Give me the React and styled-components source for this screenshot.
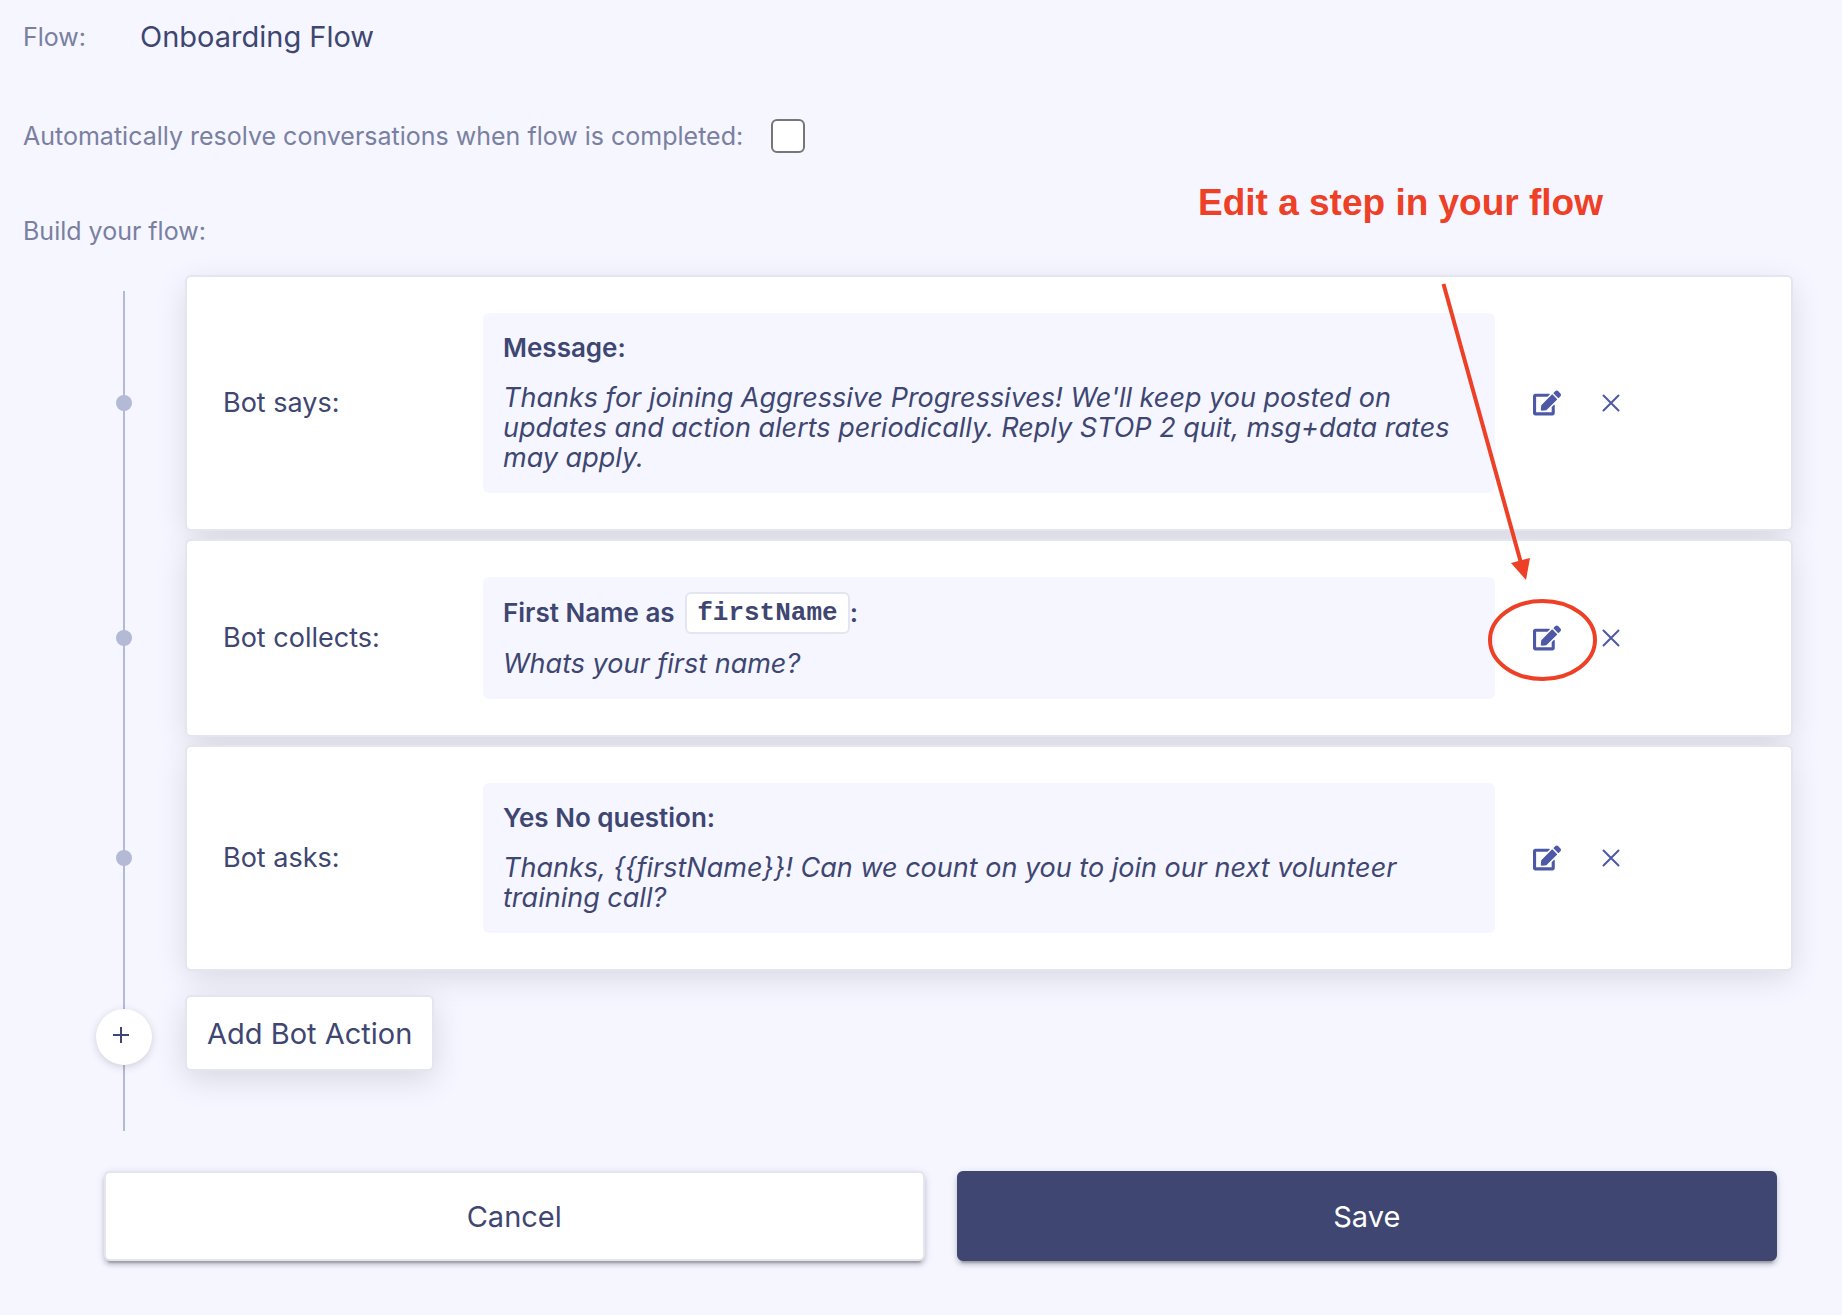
import React, { useState } from 'react';
import styled, { createGlobalStyle } from 'styled-components';
import { FaEdit } from 'react-icons/fa';

const colors = {
  page: '#f5f6ff',
  text: '#3e4671',
  label: '#7a80a0',
  icon: '#4d58a6',
  rail: '#b4b9d6',
  border: '#e3e5f1',
  callout: '#ee4026',
};

const GlobalStyle = createGlobalStyle`
  * {
    box-sizing: border-box;
  }
  body {
    margin: 0;
    background: ${colors.page};
    color: ${colors.text};
    font-family: Inter, 'Open Sans', sans-serif;
    font-size: 27px;
    line-height: 30px;
  }
  button {
    font-family: inherit;
    color: inherit;
    cursor: pointer;
  }
`;

const Page = styled.form`
  position: relative;
  padding: 20px 49px 54px 0;
`;

const Field = styled.div`
  display: flex;
  align-items: center;
  height: 34px;
  padding-left: 23px;
  margin-bottom: ${({ $gap }) => $gap}px;
`;

const Label = styled.label`
  font-size: 25px;
  color: ${colors.label};
`;

const FlowName = styled.span`
  margin-left: 54px;
  font-size: 29px;
`;

const Checkbox = styled.input`
  appearance: none;
  width: 34px;
  height: 34px;
  margin: 0 0 0 28px;
  background: #fff;
  border: 2px solid #767676;
  border-radius: 6px;
  &:checked {
    background: ${colors.icon};
  }
`;

const Builder = styled.div`
  display: grid;
  grid-template-columns: 56px 1fr;
  grid-template-rows: repeat(3, auto) auto;
  column-gap: 33px;
  row-gap: 8px;
  padding-left: 96px;
  isolation: isolate;
`;

const Rail = styled.div`
  grid-column: 1;
  grid-row: 1 / -1;
  justify-self: center;
  width: 2px;
  margin-top: 16px;
  background: ${colors.rail};
`;

const Dot = styled.span`
  grid-column: 1;
  grid-row: ${({ $row }) => $row};
  place-self: center;
  width: 16px;
  height: 16px;
  border-radius: 50%;
  background: ${colors.rail};
`;

const Card = styled.section`
  position: relative;
  grid-column: 2;
  grid-row: ${({ $row }) => $row};
  display: grid;
  grid-template-columns: 260px 1fr 260px;
  align-items: center;
  padding: 36px;
  background: #fff;
  border: 2px solid ${colors.border};
  border-radius: 6px;
  /* keeps the shadow below the neighbouring cards */
  &::before {
    content: '';
    position: absolute;
    inset: 0;
    z-index: -1;
    border-radius: 6px;
    box-shadow: 0 8px 32px rgba(0, 0, 0, 0.13);
  }
`;

const Detail = styled.div`
  padding: 20px 40px 20px 20px;
  background: ${colors.page};
  border-radius: 6px;
`;

const Title = styled.div`
  display: flex;
  align-items: center;
  font-size: 26px;
  font-weight: 600;
  white-space: pre;
  margin-bottom: 20px;
`;

const Message = styled.div`
  font-style: italic;
`;

const Chip = styled.code`
  display: flex;
  align-items: center;
  height: 42px;
  margin: -5px 0 -5px 4px;
  padding: 0 10px;
  font-family: 'Liberation Mono', monospace;
  font-weight: 700;
  background: #fff;
  border: 2px solid ${colors.border};
  border-radius: 6px;
`;

const Actions = styled.div`
  display: flex;
  align-items: center;
  gap: 41px;
  padding-left: 38px;
`;

const IconButton = styled.button`
  display: flex;
  padding: 0;
  background: none;
  border: 0;
  color: ${colors.icon};
`;

const AddCircle = styled.button`
  grid-column: 1;
  grid-row: 4;
  display: flex;
  align-items: center;
  justify-content: center;
  width: 56px;
  height: 56px;
  margin-top: 30px;
  padding: 0 6px 4px 0;
  background: #fff;
  border: 0;
  border-radius: 50%;
  box-shadow: 0 2px 8px rgba(0, 0, 0, 0.16);
`;

const AddButton = styled.button`
  grid-column: 2;
  grid-row: 4;
  justify-self: start;
  height: 76px;
  margin: 16px 0 60px;
  padding: 0 20px;
  font-size: 29px;
  background: #fff;
  border: 2px solid ${colors.border};
  border-radius: 6px;
  box-shadow: 0 8px 32px rgba(0, 0, 0, 0.13);
`;

const Footer = styled.div`
  display: grid;
  grid-template-columns: 1fr 1fr;
  gap: 32px;
  margin-top: 40px;
  padding: 0 16px 0 104px;
`;

const FooterButton = styled.button`
  height: 90px;
  font-size: 29px;
  color: ${({ $primary }) => ($primary ? '#fff' : colors.text)};
  background: ${({ $primary }) => ($primary ? colors.text : '#fff')};
  border: 2px solid ${({ $primary }) => ($primary ? colors.text : colors.border)};
  border-radius: 6px;
  box-shadow: 0 6px 2px -4px rgba(0, 0, 0, 0.2), 0 4px 4px rgba(0, 0, 0, 0.14),
    0 2px 10px rgba(0, 0, 0, 0.12);
`;

const Callout = styled.div`
  position: absolute;
  top: 182px;
  right: 200px;
  width: 444px;
  pointer-events: none;
  color: ${colors.callout};
  font-family: 'Liberation Sans', Arial, sans-serif;
  font-size: 37px;
  font-weight: 700;
  line-height: 42px;
  svg {
    display: block;
  }
`;

const steps = [
  {
    label: 'Bot says:',
    title: 'Message:',
    message:
      "Thanks for joining Aggressive Progressives! We'll keep you posted on updates and action alerts periodically. Reply STOP 2 quit, msg+data rates may apply.",
  },
  {
    label: 'Bot collects:',
    title: (
      <>
        {'First Name as '}
        <Chip>firstName</Chip>:
      </>
    ),
    message: 'Whats your first name?',
  },
  {
    label: 'Bot asks:',
    title: 'Yes No question:',
    message: 'Thanks, {{firstName}}! Can we count on you to join our next volunteer training call?',
  },
];

function Step({ row, label, title, message }) {
  return (
    <>
      <Dot $row={row} />
      <Card $row={row}>
        <div>{label}</div>
        <Detail>
          <Title>{title}</Title>
          <Message>{message}</Message>
        </Detail>
        <Actions>
          <IconButton type='button' aria-label='Edit step'>
            <FaEdit size={28} />
          </IconButton>
          <IconButton type='button' aria-label='Remove step'>
            <svg width='18' height='18' viewBox='0 0 18 18' stroke='currentColor' strokeWidth='2'>
              <path d='M1.5 1.5l15 15M16.5 1.5l-15 15' strokeLinecap='round' />
            </svg>
          </IconButton>
        </Actions>
      </Card>
    </>
  );
}

function EditCallout() {
  return (
    <Callout>
      Edit a step in your flow
      <svg width='444' height='470' viewBox='1198 224 444 470' fill='none'>
        <path d='M1443.5 284L1521 563' stroke='currentColor' strokeWidth='4' />
        <path d='M1511 563L1530 558L1526 580Z' fill='currentColor' />
        <ellipse cx='1542.5' cy='640' rx='52.5' ry='39' stroke='currentColor' strokeWidth='4' />
      </svg>
    </Callout>
  );
}

function App() {
  const [resolve, setResolve] = useState(false);

  return (
    <>
      <GlobalStyle />
      <Page onSubmit={(e) => e.preventDefault()}>
        <Field $gap={65}>
          <Label as='span'>Flow:</Label>
          <FlowName>Onboarding Flow</FlowName>
        </Field>
        <Field $gap={61}>
          <Label htmlFor='resolve'>
            Automatically resolve conversations when flow is completed:
          </Label>
          <Checkbox
            id='resolve'
            type='checkbox'
            checked={resolve}
            onChange={(e) => setResolve(e.target.checked)}
          />
        </Field>
        <Field $gap={27}>
          <Label as='span'>Build your flow:</Label>
        </Field>
        <Builder>
          <Rail />
          {steps.map((step, i) => (
            <Step key={step.label} row={i + 1} {...step} />
          ))}
          <AddCircle type='button' aria-label='Add step'>
            <svg width='18' height='18' viewBox='0 0 18 18' stroke='currentColor' strokeWidth='2'>
              <path d='M9 1v16M1 9h16' />
            </svg>
          </AddCircle>
          <AddButton type='button'>Add Bot Action</AddButton>
        </Builder>
        <Footer>
          <FooterButton type='button'>Cancel</FooterButton>
          <FooterButton type='submit' $primary>
            Save
          </FooterButton>
        </Footer>
        <EditCallout />
      </Page>
    </>
  );
}

export default App;
